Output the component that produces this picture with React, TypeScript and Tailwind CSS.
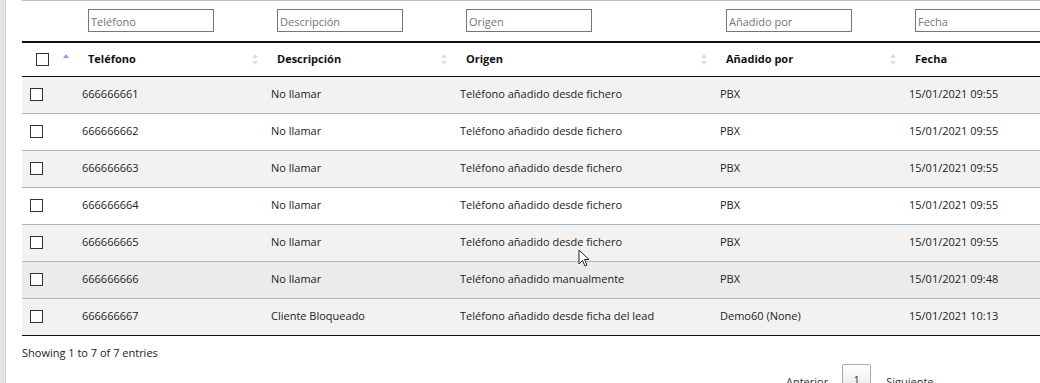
import React from "react";

type Row = {
  telefono: string;
  descripcion: string;
  origen: string;
  anadido: string;
  fecha: string;
};

const rows: Row[] = [
  { telefono: "666666661", descripcion: "No llamar", origen: "Teléfono añadido desde fichero", anadido: "PBX", fecha: "15/01/2021 09:55" },
  { telefono: "666666662", descripcion: "No llamar", origen: "Teléfono añadido desde fichero", anadido: "PBX", fecha: "15/01/2021 09:55" },
  { telefono: "666666663", descripcion: "No llamar", origen: "Teléfono añadido desde fichero", anadido: "PBX", fecha: "15/01/2021 09:55" },
  { telefono: "666666664", descripcion: "No llamar", origen: "Teléfono añadido desde fichero", anadido: "PBX", fecha: "15/01/2021 09:55" },
  { telefono: "666666665", descripcion: "No llamar", origen: "Teléfono añadido desde fichero", anadido: "PBX", fecha: "15/01/2021 09:55" },
  { telefono: "666666666", descripcion: "No llamar", origen: "Teléfono añadido manualmente", anadido: "PBX", fecha: "15/01/2021 09:48" },
  { telefono: "666666667", descripcion: "Cliente Bloqueado", origen: "Teléfono añadido desde ficha del lead", anadido: "Demo60 (None)", fecha: "15/01/2021 10:13" },
];

const rowBg = ["bg-[#f2f2f2]", "bg-white", "bg-[#f2f2f2]", "bg-white", "bg-[#f2f2f2]", "bg-[#ebebeb]", "bg-[#f2f2f2]"];

function SortIcon({ active }: { active?: boolean }) {
  return (
    <svg width="6" height="12" viewBox="0 0 6 12" className="absolute right-[3px] top-[11px]">
      <path d="M0 4 L3 0 L6 4 Z" fill={active ? "#7ea6d0" : "#dcdcdc"} />
      {!active && <path d="M0 7 L3 11 L6 7 Z" fill="#dcdcdc" />}
    </svg>
  );
}

function Box({ className = "" }: { className?: string }) {
  return <span className={`block w-[13px] h-[13px] border border-[#333] bg-white ${className}`} />;
}

function Filter({ placeholder }: { placeholder: string }) {
  return (
    <input
      placeholder={placeholder}
      className="w-[126px] h-[23px] border border-[#767676] bg-white px-[2px] pt-px text-[11px] font-normal text-[#333] placeholder:text-[#757575] outline-none"
    />
  );
}

const headers = ["Teléfono", "Descripción", "Origen", "Añadido por", "Fecha"];

export default function App() {
  return (
    <div
      className="relative w-[1040px] h-[383px] overflow-hidden bg-white flex"
      style={{ fontFamily: '"Open Sans", "Noto Sans", sans-serif' }}
    >
      <div className="w-[6px] shrink-0 bg-[#e2e5e8] border-r border-[#ccd3d9]" />
      <div className="pl-[16px] shrink-0">
        <table className="table-fixed border-collapse w-[1110px] text-[11px] text-[#222]">
          <colgroup>
            <col className="w-[50px]" />
            <col className="w-[189px]" />
            <col className="w-[189px]" />
            <col className="w-[260px]" />
            <col className="w-[189px]" />
            <col className="w-[233px]" />
          </colgroup>
          <thead>
            <tr className="border-t border-[#b3c0ca]">
              <th className="h-[40px] p-0" />
              {headers.map((h) => (
                <th key={h} className="h-[40px] p-0 pl-[16px] pt-[8px] pb-[9px] text-left align-top">
                  <Filter placeholder={h} />
                </th>
              ))}
            </tr>
            <tr className="border-t-2 border-b border-t-[#111] border-b-[#111]">
              <th className="relative h-[34px] p-0">
                <Box className="ml-[14px]" />
                <SortIcon active />
              </th>
              {headers.map((h, i) => (
                <th key={h} className="relative h-[34px] p-0 pl-[16px] text-left font-bold text-[#111]">
                  {h}
                  {i < 4 && <SortIcon />}
                </th>
              ))}
            </tr>
          </thead>
          <tbody>
            {rows.map((r, i) => (
              <tr
                key={r.telefono}
                className={`${rowBg[i]} border-b ${i === rows.length - 1 ? "border-b-[#111]" : "border-b-[#a9b7c3]"}`}
              >
                <td className="h-[37px] p-0">
                  <Box className="ml-[8px]" />
                </td>
                <td className="h-[37px] p-0 pl-[10px]">{r.telefono}</td>
                <td className="h-[37px] p-0 pl-[10px]">{r.descripcion}</td>
                <td className="h-[37px] p-0 pl-[10px]">{r.origen}</td>
                <td className="h-[37px] p-0 pl-[10px]">{r.anadido}</td>
                <td className="h-[37px] p-0 pl-[10px]">{r.fecha}</td>
              </tr>
            ))}
          </tbody>
        </table>
        <div className="pt-[9px] text-[11px] text-[#222] leading-[16px]">Showing 1 to 7 of 7 entries</div>
        <div className="flex items-start pl-[764px] pt-[3px] text-[11px] text-[#333]">
          <span className="pt-[10px]">Anterior</span>
          <span className="ml-[14px] w-[29px] h-[26px] border border-[#aaa] rounded-[2px] bg-gradient-to-b from-white to-[#e8e8e8] flex justify-center pt-[9px] leading-none">
            1
          </span>
          <span className="ml-[15px] pt-[10px]">Siguiente</span>
        </div>
      </div>
      <svg width="13" height="19" viewBox="0 0 13 19" className="absolute left-[578px] top-[249px]">
        <path d="M1 1 L1 15 L4.5 11.5 L7 17 L9 16 L6.5 10.5 L11 10.5 Z" fill="white" stroke="#222" strokeWidth="1" strokeLinejoin="round" />
      </svg>
    </div>
  );
}
